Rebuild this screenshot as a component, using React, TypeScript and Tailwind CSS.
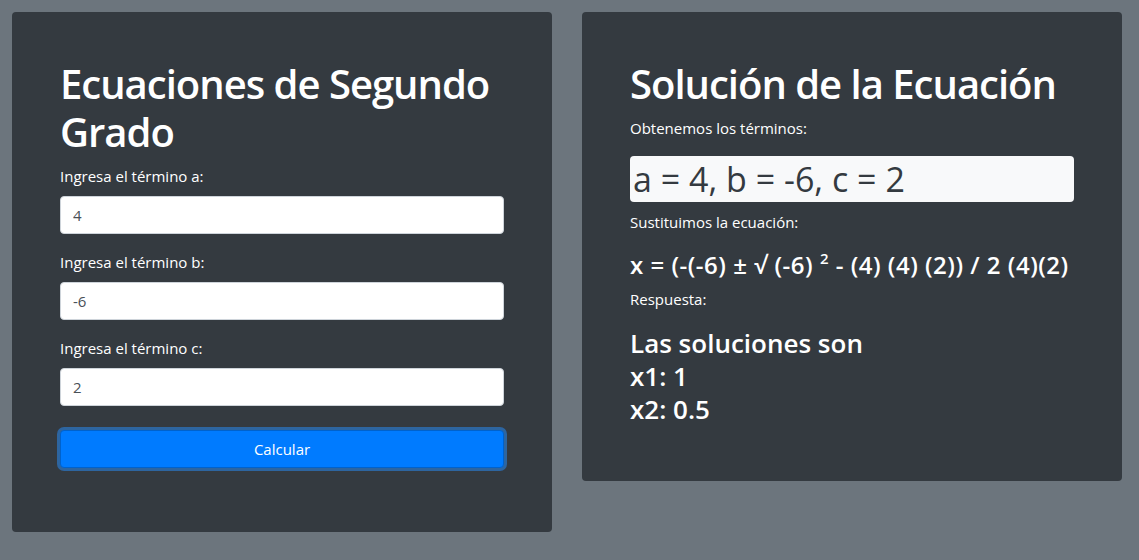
import React from "react";

const font = { fontFamily: '"Open Sans", "Noto Sans", sans-serif' };

function Field({ label, value }: { label: string; value: string }) {
  return (
    <div className="mb-4">
      <label className="block mb-2 text-[15px] leading-6 text-white">{label}</label>
      <input
        readOnly
        value={value}
        className="block w-full h-[38px] px-3 bg-white border border-[#ced4da] rounded-[4px] text-[15px] text-[#495057] outline-none"
      />
    </div>
  );
}

export default function App() {
  return (
    <div className="min-h-screen w-full bg-[#6c757d] p-3" style={font}>
      <div className="flex items-start gap-[30px]">
        <div className="w-[540px] bg-[#343a40] rounded-[4px] p-12 pb-[48px] text-white">
          <h1 className="text-[40px] leading-[48px] font-semibold mb-2 tracking-[-1px]">Ecuaciones de Segundo Grado</h1>
          <Field label="Ingresa el término a:" value="4" />
          <Field label="Ingresa el término b:" value="-6" />
          <Field label="Ingresa el término c:" value="2" />
          <button className="mt-6 block w-full h-[38px] rounded-[4px] bg-[#007bff] border border-[#0062cc] text-white text-[15px] shadow-[0_0_0_3px_rgba(38,143,255,0.5)]">
            Calcular
          </button>
          <div className="h-4" />
        </div>
        <div className="w-[540px] bg-[#343a40] rounded-[4px] p-12 pb-[55px] text-white">
          <h1 className="text-[40px] leading-[48px] font-semibold mb-2 tracking-[-1px]">Solución de la Ecuación</h1>
          <p className="text-[15px] leading-6 mb-4">Obtenemos los términos:</p>
          <div className="h-[46px] bg-[#f8f9fa] rounded-[4px] px-[3px] text-[#343a40] text-[34px] leading-[46px] mb-2">
            a = 4, b = -6, c = 2
          </div>
          <p className="text-[15px] leading-6 mb-4">Sustituimos la ecuación:</p>
          <h4 className="text-[24px] leading-[29px] font-semibold mb-2 tracking-[0.5px] whitespace-nowrap">
            x = (-(-6) ± √ (-6) <sup className="text-[15px] top-[-0.7em]">2</sup> - (4) (4) (2)) / 2 (4)(2)
          </h4>
          <p className="text-[15px] leading-6 mb-4">Respuesta:</p>
          <h3 className="text-[26px] leading-[33px] font-semibold">
            Las soluciones son
            <br />
            x1: 1
            <br />
            x2: 0.5
          </h3>
        </div>
      </div>
    </div>
  );
}
